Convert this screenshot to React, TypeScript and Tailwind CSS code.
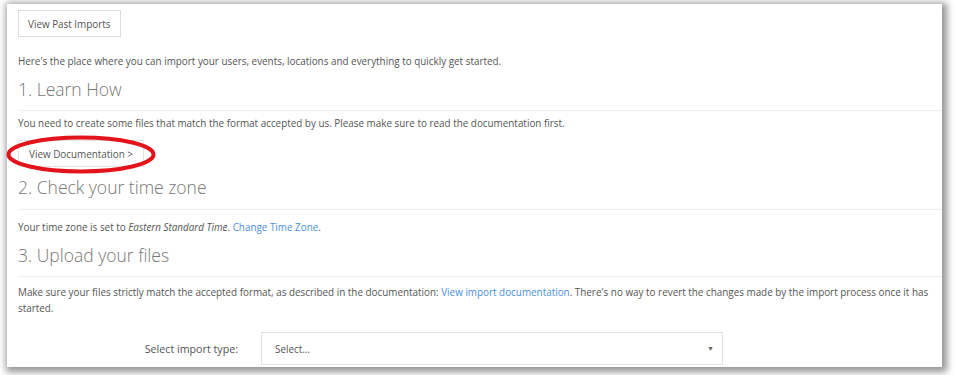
import React from 'react';

const font = { fontFamily: '"Open Sans", "Liberation Sans", sans-serif' };

const Heading: React.FC<{ children: React.ReactNode; className?: string }> = ({ children, className }) => (
  <h2 className={`text-[17.5px] leading-[24px] font-light text-[#777] ${className ?? ''}`}>{children}</h2>
);

const App: React.FC = () => {
  return (
    <div className="relative w-[955px] h-[375px] bg-white overflow-hidden pl-[7px] pt-[4px]" style={font}>
      <div className="relative w-[935px] h-[363px] bg-white overflow-hidden shadow-[2px_2px_7px_3px_rgba(0,0,0,0.42)]">
        <div className="w-[945px] pl-[11px] text-[9.9px] leading-[16px] text-[#555]">
          <button className="mt-[6px] h-[27px] px-[9px] border border-[#ddd] bg-white text-[9.9px] text-[#555]">
            View Past Imports
          </button>

          <p className="mt-[16px]">
            Here's the place where you can import your users, events, locations and everything to quickly get started.
          </p>

          {/* 1 */}
          <Heading className="mt-[8px]">1. Learn How</Heading>
          <div className="mt-[9px] border-t border-[#eee]" />
          <p className="mt-[4px]">
            You need to create some files that match the format accepted by us. Please make sure to read the documentation first.
          </p>
          <button className="mt-[9px] h-[27px] px-[10px] border border-[#e3e3e3] bg-white text-[9.9px] text-[#555]">
            View Documentation &gt;
          </button>

          {/* 2 */}
          <Heading className="mt-[8px]">2. Check your time zone</Heading>
          <div className="mt-[10px] border-t border-[#eee]" />
          <p className="mt-[9px]">
            Your time zone is set to <em>Eastern Standard Time</em>.{' '}
            <a className="text-[#4a8fdc]">Change Time Zone</a>.
          </p>

          {/* 3 */}
          <Heading className="mt-[8px]">3. Upload your files</Heading>
          <div className="mt-[9px] border-t border-[#eee]" />
          <p className="mt-[7px] w-[930px]">
            Make sure your files strictly match the accepted format, as described in the documentation:{' '}
            <a className="text-[#4a8fdc]">View import documentation</a>. There's no way to revert the changes made by the
            import process once it has started.
          </p>

          <div className="mt-[16px] flex items-center">
            <label className="w-[220px] text-right text-[10.7px] text-[#555]">Select import type:</label>
            <div className="ml-[23px] w-[462px] h-[33px] border border-[#e3e3e3] flex items-center justify-between pl-[13px] pr-[8px]">
              <span className="text-[#555]">Select...</span>
              <span className="text-[7px] text-[#666]">▼</span>
            </div>
          </div>
        </div>
      </div>

      {/* red annotation ellipse */}
      <svg className="absolute left-[6px] top-[135px]" width="150" height="39" viewBox="0 0 150 39">
        <ellipse cx="75" cy="19.5" rx="72.5" ry="17" fill="none" stroke="#e3131b" strokeWidth="4" />
      </svg>
    </div>
  );
};

export default App;
